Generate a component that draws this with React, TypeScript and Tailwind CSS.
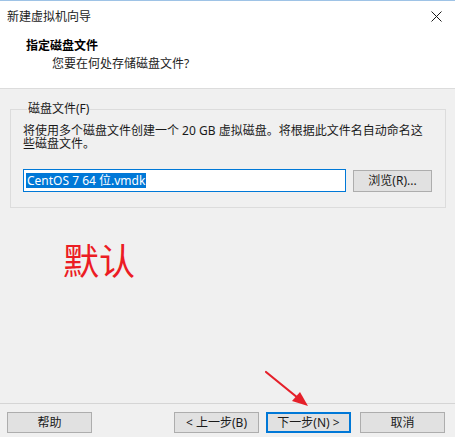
import React from "react";

const font = { fontFamily: '"Noto Sans", "Noto Sans CJK SC", sans-serif' };

function CloseIcon() {
  return (
    <svg width="11" height="11" viewBox="0 0 11 11" aria-hidden="true">
      <path d="M0.5 0.5 L10.5 10.5 M10.5 0.5 L0.5 10.5" stroke="#1a1a1a" strokeWidth="1" fill="none" />
    </svg>
  );
}

function WizardButton({ children, primary = false, className = "" }: { children: React.ReactNode; primary?: boolean; className?: string }) {
  return (
    <button
      type="button"
      className={`h-[21px] w-[85px] bg-[#e1e1e1] text-[12px] leading-none text-[#1a1a1a] ${
        primary ? "border border-[#0078d7] shadow-[inset_0_0_0_1px_#0078d7]" : "border border-[#adadad]"
      } ${className}`}
    >
      {children}
    </button>
  );
}

function RedArrow() {
  return (
    <svg className="pointer-events-none absolute left-0 top-0" width="455" height="437" aria-hidden="true">
      <line x1="266" y1="372" x2="298" y2="398" stroke="#e5202a" strokeWidth="2.2" strokeLinecap="round" />
      <polygon points="308,406 292,401 300,392" fill="#e5202a" />
    </svg>
  );
}

export default function App() {
  return (
    <div className="relative flex h-[437px] w-[455px] flex-col overflow-hidden bg-[#f0f0f0] text-[12px] text-[#1a1a1a]" style={font}>
      {/* header */}
      <div className="h-[89px] border-b border-[#dcdcdc] bg-white">
        <div className="h-px bg-[#9ec3e6]" />
        <div className="flex h-[31px] items-center justify-between pl-[7px] pr-[13px]">
          <span className="text-[12px] leading-none text-[#222]">新建虚拟机向导</span>
          <CloseIcon />
        </div>
        <div className="mt-[5px] pl-[26px] text-[12px] font-bold leading-[18px] text-black">指定磁盘文件</div>
        <div className="pl-[52px] text-[12px] leading-[18px] text-[#222]">您要在何处存储磁盘文件?</div>
      </div>

      {/* body */}
      <div className="flex flex-1 flex-col px-[10px] pt-[13px]">
        <fieldset className="border border-[#dcdcdc] pb-[15px] pl-[12px] pr-[13px] pt-[8px]">
          <legend className="ml-[4px] px-[1px] text-[12px] leading-[14px] text-[#1a1a1a]">磁盘文件(F)</legend>
          <p className="pr-[6px] text-[12px] leading-[13px]">
            将使用多个磁盘文件创建一个 20 GB 虚拟磁盘。将根据此文件名自动命名这些磁盘文件。
          </p>
          <div className="mt-[19px] flex items-center gap-[7px]">
            <div className="flex h-[23px] w-[323px] items-center border border-[#0078d7] bg-white pl-[2px]">
              <span className="bg-[#0078d7] px-px text-[12px] leading-[15px] text-white">CentOS 7 64 位.vmdk</span>
            </div>
            <button type="button" className="h-[22px] w-[79px] border border-[#adadad] bg-[#e1e1e1] text-[12px] leading-none">
              浏览(R)...
            </button>
          </div>
        </fieldset>

        <div className="mt-[34px] pl-[53px] text-[36px] leading-[40px] text-[#ec1c24]">默认</div>
      </div>

      {/* footer */}
      <div className="h-[34px] border-t border-[#d5d5d5] pt-[8px]">
        <div className="flex items-center px-[7px]">
          <WizardButton>帮助</WizardButton>
          <div className="ml-auto flex gap-[7px]">
            <WizardButton>&lt; 上一步(B)</WizardButton>
            <WizardButton primary>下一步(N) &gt;</WizardButton>
          </div>
          <WizardButton className="ml-[9px] mr-[3px]">取消</WizardButton>
        </div>
      </div>

      <RedArrow />
    </div>
  );
}
